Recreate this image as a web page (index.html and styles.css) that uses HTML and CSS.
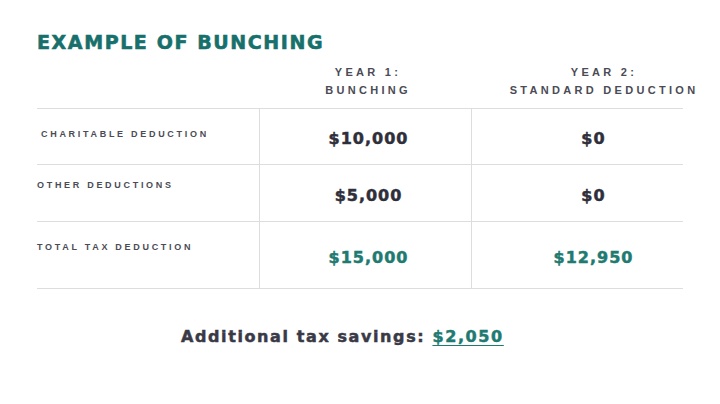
FILE: index.html
```html
<!DOCTYPE html>
<html>
<head>
<meta charset="utf-8">
<link rel="stylesheet" href="styles.css">
</head>
<body>
<main class="page">
  <h1 class="title">EXAMPLE OF BUNCHING</h1>
  <div class="head">
    <div class="h-blank"></div>
    <div class="h-col h2">YEAR 1:<br>BUNCHING</div>
    <div class="h-col h3">YEAR 2:<br>STANDARD DEDUCTION</div>
  </div>
  <div class="table">
    <div class="row r1">
      <div class="label l-indent">CHARITABLE DEDUCTION</div>
      <div class="val c2">$10,000</div>
      <div class="val c3">$0</div>
    </div>
    <div class="row r2">
      <div class="label l2">OTHER DEDUCTIONS</div>
      <div class="val c2">$5,000</div>
      <div class="val c3">$0</div>
    </div>
    <div class="row r3">
      <div class="label">TOTAL TAX DEDUCTION</div>
      <div class="val c2 teal">$15,000</div>
      <div class="val c3 teal">$12,950</div>
    </div>
  </div>
  <p class="savings">Additional tax savings: <span class="amount">$2,050</span></p>
</main>
</body>
</html>
```

FILE: styles.css
```css
* { box-sizing: border-box; }
html, body { margin: 0; padding: 0; background: #ffffff; }
.page {
  width: 720px;
  height: 404px;
  padding: 30px 0 0 37px;
  overflow: hidden;
}
.title {
  margin: 0;
  font-family: "DejaVu Sans", sans-serif;
  font-weight: 700;
  font-size: 19px;
  line-height: 24px;
  letter-spacing: 1.6px;
  color: #17706b;
  -webkit-text-stroke: 0.6px #17706b;
}
.head {
  display: flex;
  margin-top: 9px;
  height: 45px;
}
.h-blank { width: 222px; flex: none; }
.h-col {
  font-family: "Liberation Sans", sans-serif;
  font-weight: 700;
  font-size: 11px;
  line-height: 18px;
  letter-spacing: 3.3px;
  color: #4b4b55;
  text-align: center;
  flex: none;
}
.h2 { width: 218px; }
.h3 { width: 254px; }
.table {
  width: 646px;
  border-bottom: 1px solid #dddddd;
}
.row {
  display: grid;
  grid-template-columns: 222px 212px 212px;
  border-top: 1px solid #dddddd;
}
.r1 { height: 56px; }
.r2 { height: 57px; }
.r3 { height: 67px; }
.label {
  font-family: "Liberation Sans", sans-serif;
  font-weight: 700;
  font-size: 9px;
  line-height: 12px;
  letter-spacing: 2.7px;
  color: #4b4b55;
  padding-top: 19px;
}
.l-indent { padding-left: 4px; }
.l2 { padding-top: 14px; }
.val {
  display: flex;
  align-items: center;
  justify-content: center;
  padding-top: 4px;
  border-left: 1px solid #dddddd;
  font-family: "DejaVu Sans", sans-serif;
  font-weight: 700;
  font-size: 16px;
  letter-spacing: 1px;
  color: #2f2f3b;
  -webkit-text-stroke: 0.5px #2f2f3b;
}
.c2 { padding-left: 6px; }
.c3 { padding-left: 32px; }
.teal { color: #1f7a71; -webkit-text-stroke: 0.5px #1f7a71; }
.savings {
  margin: 37px 0 0 144px;
  font-family: "DejaVu Sans", sans-serif;
  font-weight: 700;
  font-size: 16px;
  line-height: 22px;
  letter-spacing: 1.6px;
  color: #3a3a47;
  -webkit-text-stroke: 0.5px #3a3a47;
}
.amount {
  color: #1f7a71;
  -webkit-text-stroke: 0.5px #1f7a71;
  text-decoration: underline;
  text-underline-offset: 3px;
}
```
